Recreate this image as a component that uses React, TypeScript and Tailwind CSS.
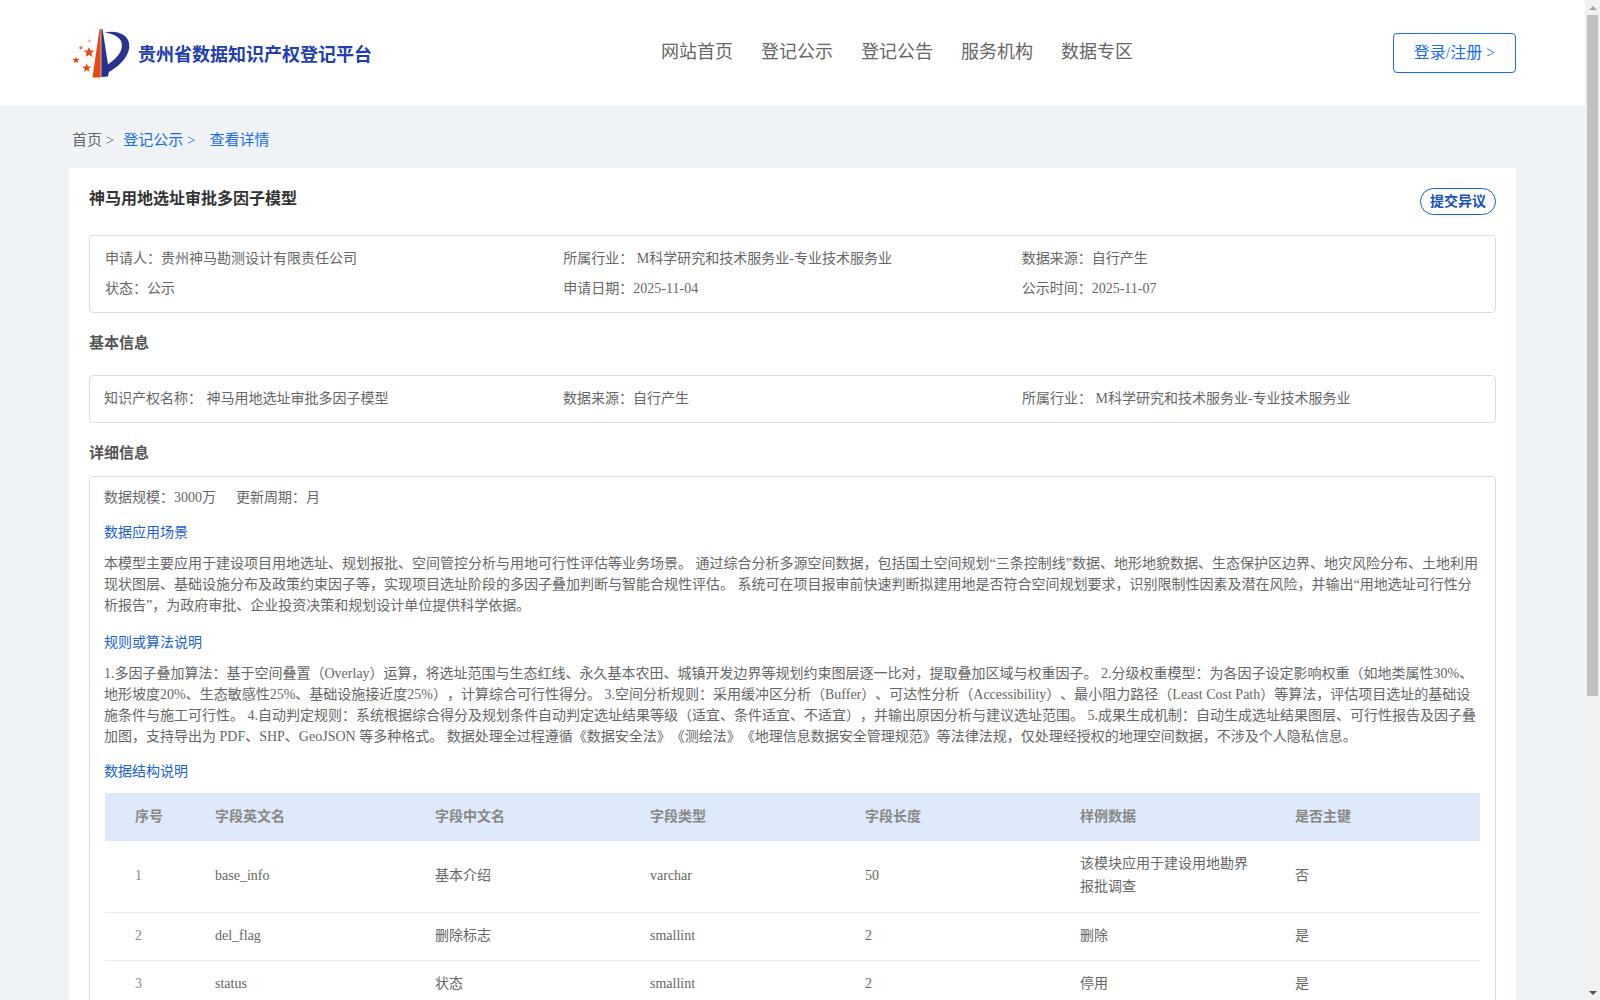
const font = "[font-family:'Liberation_Serif','Noto_Sans_CJK_SC',serif] [text-spacing-trim:space-all]";

function Logo() {
  return (
    <svg width="62" height="54" viewBox="70 26 62 54" className="shrink-0">
      <path d="M99.5 29 L100.7 29 L100.7 77.5 L92.5 77.5 Z" fill="#e8490f" />
      <path d="M101.3 29 L102.5 29 L109 71 L108 76.5 L101.3 77 Z" fill="#2a3290" />
      <path d="M104.3 32.5 C118 29.5 129.5 35 129.3 46 C129 58 117 68 107 73 L106.5 65.5 C114 60 122 54 122 45 C122 38 114 33.5 104.3 32.5 Z" fill="#2a3290" />
      <path d="M89 47 L90.5 50.5 L94.5 50.5 L91.3 53 L92.5 57 L89 54.7 L85.5 57 L86.7 53 L83.5 50.5 L87.5 50.5 Z" fill="#e8490f" />
      <path d="M76 56.8 L77 59 L79.5 59 L77.5 60.7 L78.2 63.3 L76 61.8 L73.8 63.3 L74.5 60.7 L72.5 59 L75 59 Z" fill="#e8490f" />
      <path d="M86.7 63.5 L88 66.5 L91.3 66.5 L88.6 68.7 L89.6 72 L86.7 70 L83.8 72 L84.8 68.7 L82.1 66.5 L85.4 66.5 Z" fill="#e8490f" />
      <circle cx="81" cy="47.7" r="1.7" fill="#ee7a50" />
      <circle cx="89.5" cy="40.8" r="1.2" fill="#f2a080" />
    </svg>
  );
}

function Row({ children, className = "" }: { children: React.ReactNode; className?: string }) {
  return <div className={`grid grid-cols-3 ${className}`}>{children}</div>;
}

const tableRows = [
  ["1", "base_info", "基本介绍", "varchar", "50", "该模块应用于建设用地勘界报批调查", "否"],
  ["2", "del_flag", "删除标志", "smallint", "2", "删除", "是"],
  ["3", "status", "状态", "smallint", "2", "停用", "是"],
];

export default function App() {
  return (
    <div className={`flex h-screen overflow-hidden bg-white text-[14px] text-[#666] ${font}`}>
      <div className="flex-1 min-w-0 h-full overflow-hidden bg-[#eff3f6]">
        <header className="h-[105px] bg-white flex items-center pl-[70px] pr-[69px]">
          <div className="w-[591px] flex items-center gap-[6px]">
            <Logo />
            <span className="mt-[5px] text-[18px] font-bold text-[#1f3fad] whitespace-nowrap">贵州省数据知识产权登记平台</span>
          </div>
          <nav className="flex gap-[28px] text-[18px] text-[#666] pb-[1px]">
            <span>网站首页</span>
            <span>登记公示</span>
            <span>登记公告</span>
            <span>服务机构</span>
            <span>数据专区</span>
          </nav>
          <button className="ml-auto w-[123px] h-[40px] border border-[#1a6bec] rounded-[4px] text-[16px] text-[#1a6dee]">
            登录/注册 &gt;
          </button>
        </header>

        <div className="pl-[72px] h-[63px] flex items-center text-[15px] pt-[8px]">
          <span>首页 &gt;</span>
          <span className="ml-[9px] text-[#1a6dee]">登记公示 &gt;</span>
          <span className="ml-[14px] text-[#1a6dee]">查看详情</span>
        </div>

        <main className="ml-[69px] mr-[69px] bg-white px-[20px] pt-[20px] pb-[40px]">
          <div className="flex justify-between items-start h-[47px]">
            <h1 className="text-[16px] font-bold text-[#333] leading-[22px]">神马用地选址审批多因子模型</h1>
            <button className="w-[76px] h-[27px] rounded-[14px] border border-[#1a5fd0] text-[14px] font-bold text-[#1650c0] leading-none">
              提交异议
            </button>
          </div>

          <div className="border border-[#ddd] rounded-[4px] px-[15px] h-[78px] py-[7px]">
            <Row className="h-[30px] items-center">
              <div>申请人：贵州神马勘测设计有限责任公司</div>
              <div>所属行业： M科学研究和技术服务业-专业技术服务业</div>
              <div>数据来源：自行产生</div>
            </Row>
            <Row className="h-[30px] items-center">
              <div>状态：公示</div>
              <div>申请日期：2025-11-04</div>
              <div>公示时间：2025-11-07</div>
            </Row>
          </div>

          <h2 className="h-[62px] pb-[1px] flex items-center text-[15px] font-bold text-[#555]">基本信息</h2>

          <div className="border border-[#ddd] rounded-[4px] px-[14px] h-[48px] pb-[2px] flex items-center">
            <Row className="w-full">
              <div>知识产权名称： <span className="ml-[1px]">神马用地选址审批多因子模型</span></div>
              <div>数据来源：自行产生</div>
              <div>所属行业： M科学研究和技术服务业-专业技术服务业</div>
            </Row>
          </div>

          <h2 className="h-[53px] pt-[7px] flex items-center text-[15px] font-bold text-[#555]">详细信息</h2>

          <div className="border border-[#ddd] rounded-t-[4px] px-[14px] pt-[9px]">
            <div className="leading-[24px]">数据规模：3000万<span className="ml-[20px]">更新周期：月</span></div>
            <h3 className="mt-[11px] leading-[24px] text-[#1a5fd0]">数据应用场景</h3>
            <p className="mt-[8px] leading-[21px]">
              本模型主要应用于建设项目用地选址、规划报批、空间管控分析与用地可行性评估等业务场景。 通过综合分析多源空间数据，包括国土空间规划“三条控制线”数据、地形地貌数据、生态保护区边界、地灾风险分布、土地利用现状图层、基础设施分布及政策约束因子等，实现项目选址阶段的多因子叠加判断与智能合规性评估。 系统可在项目报审前快速判断拟建用地是否符合空间规划要求，识别限制性因素及潜在风险，并输出“用地选址可行性分析报告”，为政府审批、企业投资决策和规划设计单位提供科学依据。
            </p>
            <h3 className="mt-[15px] leading-[24px] text-[#1a5fd0]">规则或算法说明</h3>
            <p className="mt-[8px] leading-[21px]">
              1.多因子叠加算法：基于空间叠置（Overlay）运算，将选址范围与生态红线、永久基本农田、城镇开发边界等规划约束图层逐一比对，提取叠加区域与权重因子。 2.分级权重模型：为各因子设定影响权重（如地类属性30%、地形坡度20%、生态敏感性25%、基础设施接近度25%），计算综合可行性得分。 3.空间分析规则：采用缓冲区分析（Buffer）、可达性分析（Accessibility）、最小阻力路径（Least Cost Path）等算法，评估项目选址的基础设施条件与施工可行性。 4.自动判定规则：系统根据综合得分及规划条件自动判定选址结果等级（适宜、条件适宜、不适宜），并输出原因分析与建议选址范围。 5.成果生成机制：自动生成选址结果图层、可行性报告及因子叠加图，支持导出为 PDF、SHP、GeoJSON 等多种格式。 数据处理全过程遵循《数据安全法》《测绘法》《地理信息数据安全管理规范》等法律法规，仅处理经授权的地理空间数据，不涉及个人隐私信息。
            </p>
            <h3 className="mt-[13px] leading-[24px] text-[#1a5fd0]">数据结构说明</h3>
            <table className="mt-[9px] ml-[1px] w-[1375px] table-fixed border-collapse">
              <colgroup>
                <col className="w-[100px]" />
                <col className="w-[220px]" />
                <col className="w-[215px]" />
                <col className="w-[215px]" />
                <col className="w-[215px]" />
                <col className="w-[215px]" />
                <col />
              </colgroup>
              <thead>
                <tr className="bg-[#deeafc] h-[48px]">
                  {["序号", "字段英文名", "字段中文名", "字段类型", "字段长度", "样例数据", "是否主键"].map((h, i) => (
                    <th key={h} className={`pb-[2px] text-left font-bold text-[#888] ${i === 0 ? "pl-[30px]" : "pl-[10px]"}`}>{h}</th>
                  ))}
                </tr>
              </thead>
              <tbody>
                {tableRows.map((r, ri) => (
                  <tr key={r[0]} className={`border-b border-[#e8ecef] ${ri === 0 ? "h-[71px]" : "h-[48px]"}`}>
                    {r.map((c, i) => (
                      <td key={i} className={`pb-[2px] leading-[23px] ${i === 0 ? "pl-[30px] text-[#888]" : "pl-[10px] pr-[30px]"}`}>{c}</td>
                    ))}
                  </tr>
                ))}
              </tbody>
            </table>
          </div>
        </main>
      </div>

      <div className="w-[15px] shrink-0 h-full bg-[#f1f1f1] flex flex-col items-center">
        <div className="h-[15px] w-full flex items-center justify-center">
          <div className="w-0 h-0 border-x-[4px] border-x-transparent border-b-[4px] border-b-[#a3a3a3]" />
        </div>
        <div className="w-[11px] h-[681px] bg-[#c1c1c1]" />
        <div className="mt-auto h-[15px] w-full flex items-center justify-center">
          <div className="w-0 h-0 border-x-[4px] border-x-transparent border-t-[4px] border-t-[#505050]" />
        </div>
      </div>
    </div>
  );
}
